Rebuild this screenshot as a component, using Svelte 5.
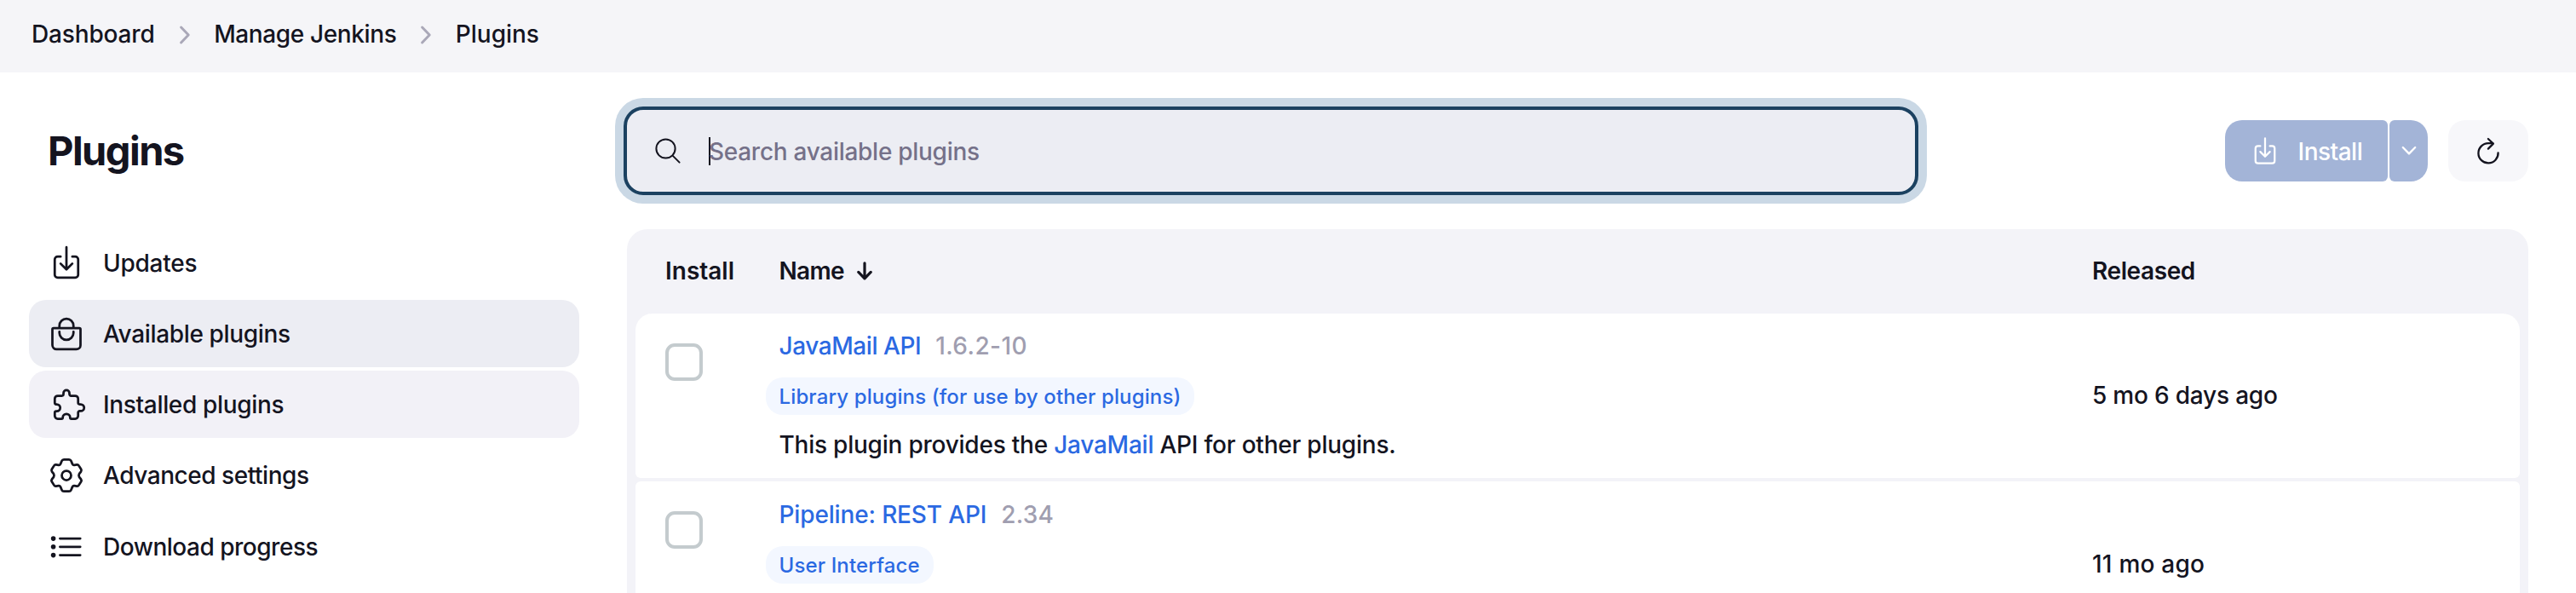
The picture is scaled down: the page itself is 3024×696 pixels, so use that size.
<script>
  const crumbs = [
    { label: 'Dashboard', tracking: -0.153 },
    { label: 'Manage Jenkins', tracking: -0.378 },
    { label: 'Plugins', tracking: -0.02 },
  ];

  const tasks = [
    { label: 'Updates', icon: 'download', tracking: -0.241 },
    { label: 'Available plugins', icon: 'bag', state: 'active', tracking: -0.344 },
    { label: 'Installed plugins', icon: 'puzzle', state: 'hovered', tracking: -0.34 },
    { label: 'Advanced settings', icon: 'gear', tracking: -0.452 },
    { label: 'Download progress', icon: 'list', tracking: -0.49 },
  ];

  const plugins = [
    {
      name: 'JavaMail API',
      nameTracking: -0.43,
      version: '1.6.2-10',
      versionTracking: 0.4,
      tag: 'Library plugins (for use by other plugins)',
      description: ['This plugin provides the ', 'JavaMail', ' API for other plugins.'],
      released: '5 mo 6 days ago',
      releasedTracking: -0.2,
    },
    {
      name: 'Pipeline: REST API',
      nameTracking: -0.15,
      version: '2.34',
      versionTracking: 0.2,
      tag: 'User Interface',
      released: '11 mo ago',
      releasedTracking: 0.225,
    },
  ];
</script>

{#snippet downloadPaths()}
  <path d="M336 176h40a40 40 0 0140 40v208a40 40 0 01-40 40H136a40 40 0 01-40-40V216a40 40 0 0140-40h40M176 272l80 80 80-80M256 48v288" />
{/snippet}

<div class="page">
  <nav class="breadcrumbs">
    {#each crumbs as crumb, i}
      {#if i > 0}
        <svg class="separator" viewBox="0 0 12 22"><path d="M1.6 2l8.6 9-8.6 9" /></svg>
      {/if}
      <a href="#top" style:letter-spacing="{crumb.tracking}px">{crumb.label}</a>
    {/each}
  </nav>

  <div class="body">
    <aside>
      <h1>Plugins</h1>
      <div class="tasks">
        {#each tasks as task}
          <a href="#top" class="task {task.state ?? ''}" style:letter-spacing="{task.tracking}px">
            {#if task.icon === 'download'}
              <svg class="ion" viewBox="0 0 512 512">{@render downloadPaths()}</svg>
            {:else if task.icon === 'bag'}
              <svg class="ion" viewBox="0 0 512 512">
                <path d="M80 176a16 16 0 00-16 16v216c0 30.24 25.76 56 56 56h272c30.24 0 56-24.51 56-54.75V192a16 16 0 00-16-16zM160 176v-32a96 96 0 0196-96h0a96 96 0 0196 96v32M160 224v16a96 96 0 0096 96h0a96 96 0 0096-96v-16" />
              </svg>
            {:else if task.icon === 'puzzle'}
              <svg viewBox="6 7.8 44 44">
                <path d="M17.8 19.3H22.6a1.9 1.9 0 0 0 1.9-1.9V16.2a3.5 3.5 0 0 1 7 0V17.4a1.9 1.9 0 0 0 1.9 1.9H38.2a3.5 3.5 0 0 1 3.5 3.5V27.4a1.9 1.9 0 0 0 1.9 1.9H44.8a3.95 3.95 0 0 1 0 7.9H43.6a1.9 1.9 0 0 0-1.9 1.9V42.8a3.5 3.5 0 0 1-3.5 3.5H33.8a1.5 1.5 0 0 1-1.5-1.5a4.3 4.1 0 0 0-8.6 0a1.5 1.5 0 0 1-1.5 1.5H17.8a3.5 3.5 0 0 1-3.5-3.5V39.2a1.7 1.7 0 0 1 1.7-1.7h.6a4.1 4.1 0 0 0 0-8.2h-.6a1.7 1.7 0 0 1-1.7-1.7V22.8a3.5 3.5 0 0 1 3.5-3.5z" />
              </svg>
            {:else if task.icon === 'gear'}
              <svg viewBox="6 8 44 44">
                <path d="M25 11.3H31Q32.8 11.3 33.5 13L35 16.6Q35.7 18 37.2 17.8L40.3 17.4Q41.8 17.2 42.6 18.6L45.2 22.8Q46 24.2 45 25.6L43 28.2Q42 30 43 31.8L45 34.4Q46 35.8 45.2 37.2L42.6 41.4Q41.8 42.8 40.3 42.6L37.2 42.2Q35.7 42 35 43.4L33.5 47Q32.8 48.7 31 48.7H25Q23.2 48.7 22.5 47L21 43.4Q20.3 42 18.8 42.2L15.7 42.6Q14.2 42.8 13.4 41.4L10.8 37.2Q10 35.8 11 34.4L13 31.8Q14 30 13 28.2L11 25.6Q10 24.2 10.8 22.8L13.4 18.6Q14.2 17.2 15.7 17.4L18.8 17.8Q20.3 18 21 16.6L22.5 13Q23.2 11.3 25 11.3z" />
                <circle cx="28" cy="30" r="5.5" />
              </svg>
            {:else}
              <svg viewBox="0 0 44 44">
                <path d="M14.4 13.1H38.2M14.4 22.8H38.2M14.4 32.6H38.2" />
                <g class="dots">
                  <circle cx="6.6" cy="13.1" r="2.8" />
                  <circle cx="6.6" cy="22.8" r="2.8" />
                  <circle cx="6.6" cy="32.6" r="2.8" />
                </g>
              </svg>
            {/if}
            <span>{task.label}</span>
          </a>
        {/each}
      </div>
    </aside>

    <main>
      <div class="toolbar">
        <div class="search">
          <svg viewBox="0 0 30 30"><circle cx="12.5" cy="12.5" r="11.1" /><path d="M20.6 20.6l8 8" /></svg>
          <span class="caret"></span>
          <span class="placeholder">Search available plugins</span>
        </div>
        <div class="actions">
          <button class="install">
            <svg class="ion" viewBox="0 0 512 512">{@render downloadPaths()}</svg>
            <span>Install</span>
          </button>
          <button class="more" aria-label="More">
            <svg viewBox="0 0 18 12"><path d="M1.8 2l7.2 7.4L16.2 2" /></svg>
          </button>
          <button class="refresh" aria-label="Refresh">
            <svg viewBox="0 0 42 38">
              <path d="M32.6 21.3A11.6 11.6 0 1 1 21 10.2H26.2" />
              <path d="M20.9 5l6 5.6-6 6" />
            </svg>
          </button>
        </div>
      </div>

      <div class="table">
        <div class="head">
          <span class="col-install">Install</span>
          <span class="col-name">
            Name
            <svg viewBox="0 0 18 22"><path d="M9 1.8V20M1.8 12.4L9 19.8l7.2-7.4" /></svg>
          </span>
          <span class="col-released">Released</span>
        </div>
        {#each plugins as plugin}
          <div class="row">
            <div class="check"></div>
            <div class="info">
              <div class="title">
                <a href="#top" style:letter-spacing="{plugin.nameTracking}px">{plugin.name}</a>
                <span class="version" style:letter-spacing="{plugin.versionTracking}px">{plugin.version}</span>
              </div>
              <a href="#top" class="tag">{plugin.tag}</a>
              {#if plugin.description}
                <p>{plugin.description[0]}<a href="#top">{plugin.description[1]}</a>{plugin.description[2]}</p>
              {/if}
            </div>
            <div class="released" style:letter-spacing="{plugin.releasedTracking}px">{plugin.released}</div>
          </div>
        {/each}
      </div>
    </main>
  </div>
</div>

<style>
  :global(body) {
    margin: 0;
    background: #fff;
  }
  * {
    box-sizing: border-box;
  }
  .page {
    width: 3024px;
    height: 696px;
    overflow: hidden;
    display: flex;
    flex-direction: column;
    background: #fff;
    color: #14141f;
    font: 500 28px/40px Inter, sans-serif;
  }
  a {
    color: inherit;
    text-decoration: none;
  }
  svg {
    display: block;
    flex: none;
    fill: none;
    stroke: currentColor;
    stroke-linecap: round;
    stroke-linejoin: round;
    overflow: visible;
  }

  .breadcrumbs {
    flex: none;
    height: 85px;
    padding: 0 37px 5px;
    display: flex;
    align-items: center;
    background: #f5f5f8;
    white-space: nowrap;
  }
  .separator {
    width: 12px;
    height: 22px;
    margin: 1px 28.5px 0 29px;
    stroke: #aaa8b8;
    stroke-width: 3;
  }

  .body {
    flex: 1;
    min-height: 0;
    display: flex;
  }
  aside {
    flex: none;
    width: 736px;
    padding: 40px 56px 0 34px;
  }
  h1 {
    height: 104px;
    margin: 0 0 39.8px;
    padding-left: 22px;
    font-size: 47px;
    font-weight: 700;
    line-height: 104px;
    letter-spacing: -1.55px;
  }
  .tasks {
    display: flex;
    flex-direction: column;
    gap: 4px;
  }
  .task {
    height: 79.2px;
    padding-left: 22px;
    display: flex;
    align-items: center;
    gap: 21px;
    border-radius: 20px;
    white-space: nowrap;
  }
  .task span {
    padding-top: 1px;
  }
  .active {
    background: #ecedf3;
  }
  .hovered {
    background: #f2f1f7;
  }
  .task svg {
    width: 44px;
    height: 44px;
    stroke-width: 2.75;
  }
  .task svg.ion {
    stroke-width: 32;
  }
  .dots {
    fill: currentColor;
    stroke: none;
  }

  main {
    flex: 1;
    padding: 40px 56px 0 0;
    display: flex;
    flex-direction: column;
  }
  .toolbar {
    flex: none;
    height: 104px;
    margin-bottom: 40px;
    display: flex;
    align-items: center;
    justify-content: space-between;
  }
  .search {
    width: 1520px;
    height: 104px;
    margin-left: -4px;
    padding-left: 33px;
    display: flex;
    align-items: center;
    border: 4px solid #1b4160;
    border-radius: 23px;
    background: #ecedf3;
    box-shadow: 0 0 0 10px #cad8e5;
  }
  .search svg {
    width: 30px;
    height: 30px;
    stroke-width: 2;
  }
  .caret {
    width: 2px;
    height: 33px;
    margin-left: 33px;
    background: #14141f;
  }
  .placeholder {
    margin-left: -2px;
    padding-top: 1px;
    color: #757189;
    letter-spacing: -0.282px;
  }
  .actions {
    display: flex;
  }
  button {
    height: 72px;
    padding: 0;
    border: 0;
    display: flex;
    align-items: center;
    color: #fff;
    background: #a3b4d7;
    font: inherit;
    letter-spacing: -0.5px;
  }
  .install {
    width: 191px;
    padding-left: 29px;
    gap: 20.5px;
    border-radius: 20px 6px 6px 20px;
  }
  .install span {
    padding-top: 1px;
  }
  .install svg {
    width: 36px;
    height: 36px;
    stroke-width: 32;
  }
  .more {
    width: 45px;
    margin-left: 2px;
    justify-content: center;
    border-radius: 6px 20px 20px 6px;
  }
  .more svg {
    width: 18px;
    height: 12px;
    stroke-width: 2.4;
  }
  .refresh {
    width: 94px;
    margin-left: 24px;
    justify-content: center;
    border-radius: 20px;
    color: #14141f;
    background: #f7f7fa;
  }
  .refresh svg {
    width: 42px;
    height: 38px;
    stroke-width: 2.3;
  }

  .table {
    flex: none;
    padding: 0 10px 10px;
    display: flex;
    flex-direction: column;
    gap: 4px;
    border-radius: 24px;
    background: #f3f3f8;
  }
  .head,
  .row {
    display: grid;
    grid-template-columns: 168.5px 1541.5px 1fr;
  }
  .head {
    height: 95px;
    padding-top: 3px;
    align-items: center;
    font-weight: 600;
    letter-spacing: -0.4px;
  }
  .col-install {
    padding-left: 35px;
    letter-spacing: 0;
  }
  .col-name {
    display: flex;
    align-items: center;
    gap: 15px;
    letter-spacing: -0.7px;
  }
  .col-name svg {
    width: 18px;
    height: 22px;
    stroke-width: 3.2;
  }
  .row {
    height: 193px;
    padding-top: 18px;
    border-radius: 6px;
    background: #fff;
  }
  .head + .row {
    border-radius: 20px 20px 6px 6px;
  }
  .row + .row {
    height: 195px;
    padding-top: 19px;
  }
  .check {
    width: 44px;
    height: 44px;
    margin: 17px 0 0 35px;
    border: 4px solid #c4cbce;
    border-radius: 11px;
  }
  .row + .row .check {
    margin-top: 16px;
  }
  .info {
    display: flex;
    flex-direction: column;
    align-items: flex-start;
    white-space: nowrap;
  }
  .info a {
    color: #2b69e2;
  }
  .title {
    display: flex;
    gap: 17px;
  }
  .version {
    color: #a09eb0;
  }
  .info .tag {
    height: 44px;
    margin: 17px 0 15px -16px;
    padding: 1px 16px 0;
    border-radius: 20px;
    background: #f3f7ff;
    font-size: 24px;
    line-height: 44px;
    letter-spacing: 0.133px;
  }
  p {
    margin: 0;
    white-space: pre;
    letter-spacing: -0.23px;
  }
  .released {
    padding-top: 58px;
  }
</style>
